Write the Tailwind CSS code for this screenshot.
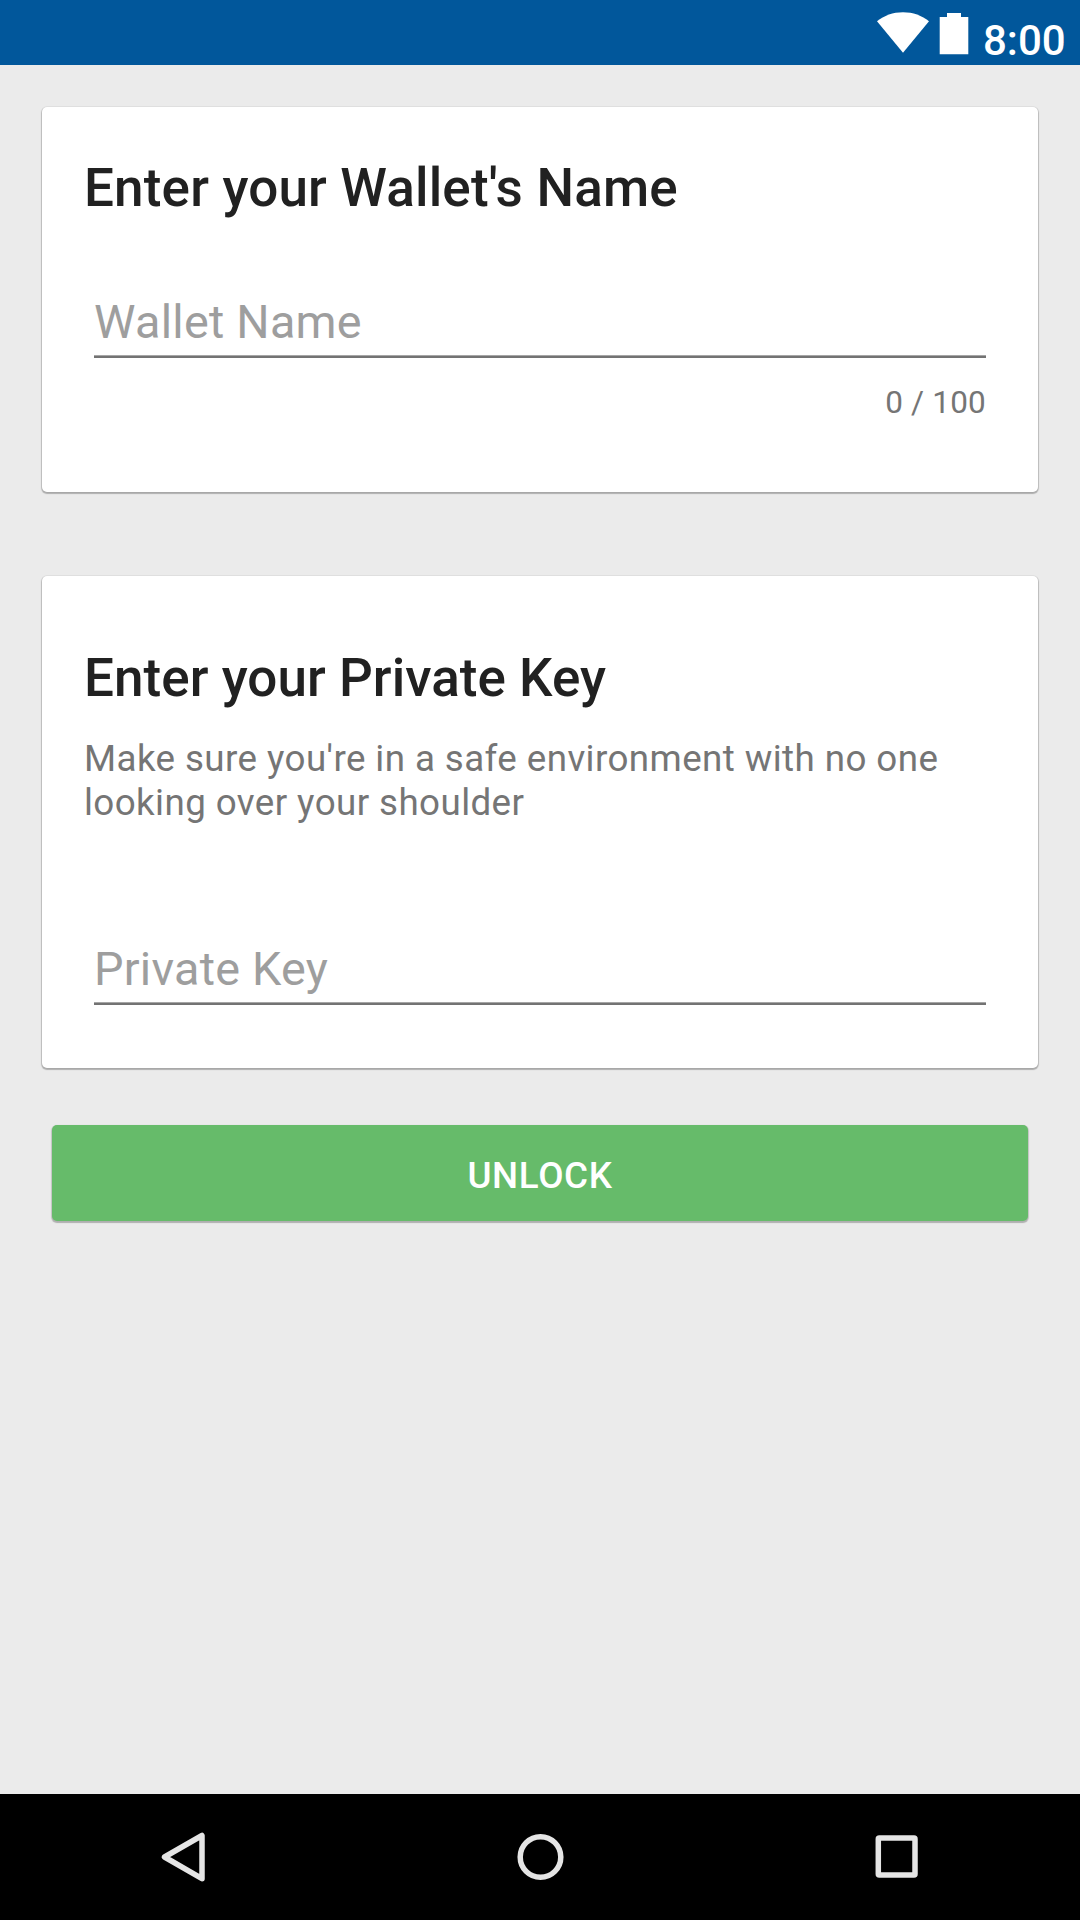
<!DOCTYPE html>
<html lang="en">
<head>
<meta charset="utf-8">
<title>Unlock Wallet</title>
<script src="https://cdn.jsdelivr.net/npm/@tailwindcss/browser@4"></script>
</head>
<body class="bg-[#ebebeb] font-['Roboto',sans-serif]">
<div class="flex flex-col w-[1080px] h-[1920px] overflow-hidden">
  <header class="flex h-[65px] shrink-0 bg-[#01579b] text-white">
    <svg class="ml-[876px] mt-3 w-[54px] h-[41px]" viewBox="0 0 54 41" fill="#fff"><path d="M1 9.2C8 3.5 17 .2 27 .2S46 3.500 53 9.200L27 40.800Z"/></svg>
    <svg class="ml-[9px] mt-[13px] w-[30px] h-[42px]" viewBox="0 0 30 42" fill="#fff"><path d="M.7 4H8V0h14v4h7.300v37.300H.7Z"/></svg>
    <span class="ml-[14px] mt-[17px] text-[42px] leading-[48px] font-medium whitespace-nowrap">8:00</span>
  </header>
  <main class="flex flex-col grow px-[42px] pt-[42px]">
    <section class="flex flex-col h-[385px] shrink-0 bg-white rounded-[5px] px-[42px] pt-[50px] shadow-[0_1px_1px_1px_rgba(0,0,0,0.17),0_2px_1px_0_rgba(0,0,0,0.1),0_0_0_1px_rgba(0,0,0,0.03)]">
      <h1 class="text-[53px] leading-[62px] font-medium tracking-[0.170px] text-[#212121] whitespace-nowrap">Enter your Wallet's Name</h1>
      <div class="flex flex-col mt-[75px] mx-[10px]">
        <span class="text-[46.750px] leading-[56px] tracking-[0.250px] text-[#9e9e9e] whitespace-nowrap">Wallet Name</span>
        <div class="mt-[5px] h-[3px] border-t border-[#a6a6a6] bg-[#737373]"></div>
        <span class="mt-[26px] text-right text-[31.500px] leading-[38px] tracking-[0.200px] text-[#757575] whitespace-nowrap">0 / 100</span>
      </div>
    </section>
    <section class="flex flex-col h-[492px] shrink-0 mt-[84px] bg-white rounded-[5px] px-[42px] pt-[71px] shadow-[0_1px_1px_1px_rgba(0,0,0,0.17),0_2px_1px_0_rgba(0,0,0,0.1),0_0_0_1px_rgba(0,0,0,0.03)]">
      <h1 class="text-[53px] leading-[62px] font-medium tracking-[0.050px] text-[#212121] whitespace-nowrap">Enter your Private Key</h1>
      <p class="mt-[28px] text-[36.750px] leading-[44px] tracking-[0.410px] text-[#757575] whitespace-nowrap">Make sure you're in a safe environment with no one<br>looking over your shoulder</p>
      <div class="flex flex-col mt-[116px] mx-[10px]">
        <span class="text-[46.750px] leading-[56px] tracking-[0.250px] text-[#9e9e9e] whitespace-nowrap">Private Key</span>
        <div class="mt-[5px] h-[3px] border-t border-[#a6a6a6] bg-[#737373]"></div>
      </div>
    </section>
    <button class="flex items-center justify-center h-[96px] shrink-0 mt-[57px] mx-[10px] pt-[5px] bg-[#66bb6a] rounded-[5px] text-white text-[36.750px] leading-[44px] tracking-[0.650px] font-medium shadow-[0_1px_1px_1px_rgba(0,0,0,0.17),0_2px_1px_0_rgba(0,0,0,0.1)]">UNLOCK</button>
  </main>
  <nav class="flex h-[126px] shrink-0 bg-black">
    <svg class="w-[1080px] h-[126px]" viewBox="0 0 1080 126" fill="none" stroke="#e5e5e5" stroke-width="5.500" stroke-linejoin="round">
      <path d="M164.500 63 202 41.500V84.700Z"/>
      <circle cx="540.500" cy="63" r="20.300"/>
      <rect x="878.300" y="44" width="36.700" height="37" rx="1"/>
    </svg>
  </nav>
</div>
</body>
</html>
